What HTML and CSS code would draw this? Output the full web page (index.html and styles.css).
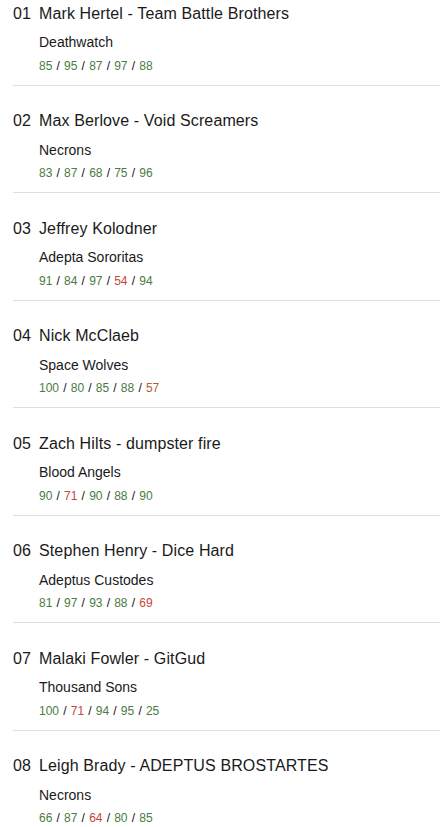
FILE: index.html
```html
<!DOCTYPE html>
<html>
<head>
<meta charset="utf-8">
<link rel="stylesheet" href="styles.css">
</head>
<body>
<ol class="list">
  <li class="item">
    <div class="title"><span class="rank">01</span><span class="name">Mark Hertel - Team Battle Brothers</span></div>
    <div class="faction">Deathwatch</div>
    <div class="scores"><span class="g">85</span> / <span class="g">95</span> / <span class="g">87</span> / <span class="g">97</span> / <span class="g">88</span></div>
  </li>
  <li class="item">
    <div class="title"><span class="rank">02</span><span class="name">Max Berlove - Void Screamers</span></div>
    <div class="faction">Necrons</div>
    <div class="scores"><span class="g">83</span> / <span class="g">87</span> / <span class="g">68</span> / <span class="g">75</span> / <span class="g">96</span></div>
  </li>
  <li class="item">
    <div class="title"><span class="rank">03</span><span class="name">Jeffrey Kolodner</span></div>
    <div class="faction">Adepta Sororitas</div>
    <div class="scores"><span class="g">91</span> / <span class="g">84</span> / <span class="g">97</span> / <span class="r">54</span> / <span class="g">94</span></div>
  </li>
  <li class="item">
    <div class="title"><span class="rank">04</span><span class="name">Nick McClaeb</span></div>
    <div class="faction">Space Wolves</div>
    <div class="scores"><span class="g">100</span> / <span class="g">80</span> / <span class="g">85</span> / <span class="g">88</span> / <span class="o">57</span></div>
  </li>
  <li class="item">
    <div class="title"><span class="rank">05</span><span class="name">Zach Hilts - dumpster fire</span></div>
    <div class="faction">Blood Angels</div>
    <div class="scores"><span class="g">90</span> / <span class="r">71</span> / <span class="g">90</span> / <span class="g">88</span> / <span class="g">90</span></div>
  </li>
  <li class="item">
    <div class="title"><span class="rank">06</span><span class="name">Stephen Henry - Dice Hard</span></div>
    <div class="faction">Adeptus Custodes</div>
    <div class="scores"><span class="g">81</span> / <span class="g">97</span> / <span class="g">93</span> / <span class="g">88</span> / <span class="r">69</span></div>
  </li>
  <li class="item">
    <div class="title"><span class="rank">07</span><span class="name">Malaki Fowler - GitGud</span></div>
    <div class="faction">Thousand Sons</div>
    <div class="scores"><span class="g">100</span> / <span class="r">71</span> / <span class="g">94</span> / <span class="g">95</span> / <span class="g">25</span></div>
  </li>
  <li class="item">
    <div class="title"><span class="rank">08</span><span class="name">Leigh Brady - ADEPTUS BROSTARTES</span></div>
    <div class="faction">Necrons</div>
    <div class="scores"><span class="g">66</span> / <span class="g">87</span> / <span class="r">64</span> / <span class="g">80</span> / <span class="g">85</span></div>
  </li>
</ol>
</body>
</html>
```
FILE: styles.css
```css
html, body {
  margin: 0;
  padding: 0;
  background: #fff;
}
body {
  font-family: "Liberation Sans", Arial, sans-serif;
  color: #1a1a1a;
}
.list {
  list-style: none;
  margin: 0;
  padding: 0 0 0 13px;
}
.item {
  padding: 23.5px 0 10px 0;
  border-bottom: 1px solid #e0e0e0;
}
.item:first-child {
  padding-top: 2px;
}
.title {
  display: flex;
  font-size: 16px;
  line-height: 24px;
}
.rank {
  width: 26px;
  flex: none;
}
.name {
  letter-spacing: 0.12px;
}
.faction {
  margin: 6.4px 0 0 26px;
  font-size: 14px;
  line-height: 20px;
}
.scores {
  margin: 4.6px 0 0 26px;
  font-size: 12px;
  line-height: 18px;
  word-spacing: 0.85px;
  color: #111;
}
.g { color: #4a7c42; }
.r { color: #c4473a; }
.o { color: #b85a30; }
```
